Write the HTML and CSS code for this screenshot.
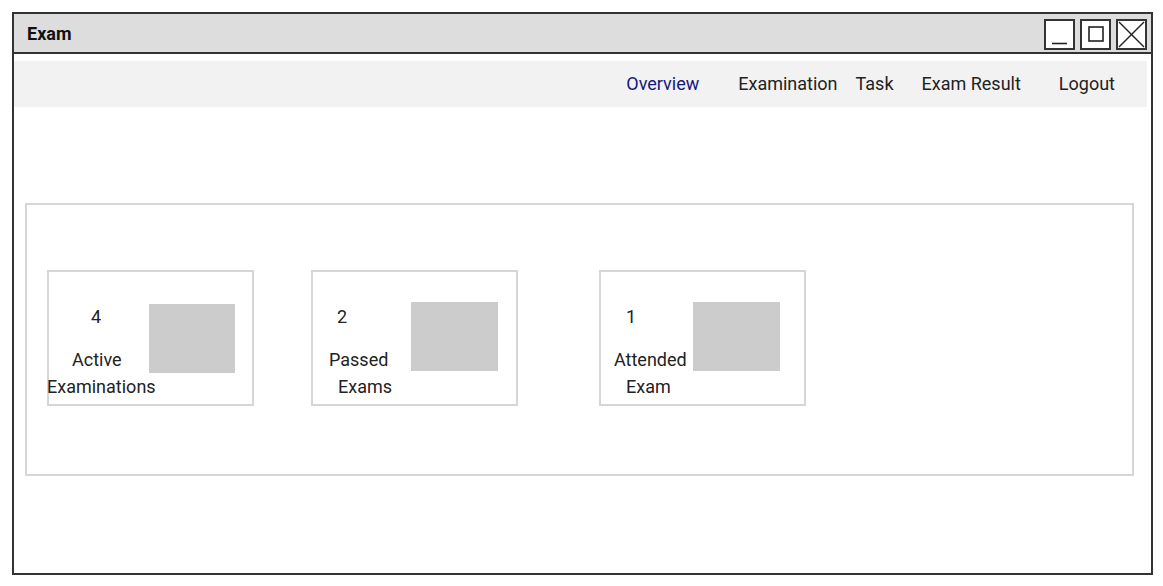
FILE: index.html
```html
<!DOCTYPE html>
<html lang="en">
<head>
<meta charset="utf-8">
<title>Exam</title>
<link rel="stylesheet" href="styles.css">
</head>
<body>
<div class="window">
  <div class="titlebar">
    <span class="title">Exam</span>
    <div class="controls">
      <span class="ctl">
        <svg width="27" height="27" viewBox="0 0 27 27"><line x1="6" y1="22.5" x2="21" y2="22.5" stroke="#222" stroke-width="1.6"/></svg>
      </span>
      <span class="ctl">
        <svg width="27" height="27" viewBox="0 0 27 27"><rect x="7" y="6" width="14" height="14" fill="none" stroke="#222" stroke-width="1.6"/></svg>
      </span>
      <span class="ctl">
        <svg width="27" height="27" viewBox="0 0 27 27"><line x1="1" y1="1" x2="26" y2="26" stroke="#222" stroke-width="1.4"/><line x1="26" y1="1" x2="1" y2="26" stroke="#222" stroke-width="1.4"/></svg>
      </span>
    </div>
  </div>
  <nav class="nav">
    <a class="nav-item active">Overview</a>
    <a class="nav-item m39">Examination</a>
    <a class="nav-item m18">Task</a>
    <a class="nav-item m28">Exam Result</a>
    <a class="nav-item m38">Logout</a>
  </nav>
  <section class="panel">
    <div class="card card-a">
      <div class="stat">
        <div class="num i42">4</div>
        <div class="lbl first i23">Active</div>
        <div class="lbl in2">Examinations</div>
      </div>
      <div class="thumb"></div>
    </div>
    <div class="card card-b">
      <div class="stat">
        <div class="num i24">2</div>
        <div class="lbl first i16">Passed</div>
        <div class="lbl i25">Exams</div>
      </div>
      <div class="thumb"></div>
    </div>
    <div class="card card-c">
      <div class="stat">
        <div class="num i25">1</div>
        <div class="lbl first i13">Attended</div>
        <div class="lbl i25">Exam</div>
      </div>
      <div class="thumb"></div>
    </div>
  </section>
</div>
</body>
</html>
```

FILE: styles.css
```css
html, body {
  margin: 0;
  padding: 0;
  background: #ffffff;
}

body {
  font-family: Roboto, "Liberation Sans", Arial, sans-serif;
  color: #222222;
}

.window {
  margin: 12px 0 0 12px;
  width: 1141px;
  height: 563px;
  box-sizing: border-box;
  border: 2px solid #333333;
  display: flex;
  flex-direction: column;
}

.titlebar {
  height: 40px;
  box-sizing: border-box;
  background: #dddddd;
  border-bottom: 2px solid #333333;
  display: flex;
  justify-content: space-between;
  align-items: flex-start;
  padding: 0 4px 0 13px;
}

.title {
  font-size: 18px;
  font-weight: 700;
  line-height: 39px;
  color: #111111;
}

.controls {
  display: flex;
  gap: 5px;
  margin-top: 5px;
}

.ctl {
  width: 31px;
  height: 31px;
  box-sizing: border-box;
  border: 2px solid #333333;
  background: #ffffff;
  display: flex;
  align-items: center;
  justify-content: center;
}

.ctl svg {
  display: block;
}

.nav {
  margin: 7px 4px 0 0;
  height: 46px;
  box-sizing: border-box;
  padding: 0 32px 2px 0;
  background: #f2f2f2;
  display: flex;
  justify-content: flex-end;
  align-items: center;
}

.nav-item {
  font-size: 18px;
  color: #222222;
  text-decoration: none;
}

.nav-item.active {
  color: #15197a;
}

.m39 { margin-left: 39px; }
.m18 { margin-left: 18px; }
.m28 { margin-left: 28px; }
.m38 { margin-left: 38px; }

.panel {
  margin: 96px 17px 0 11px;
  height: 273px;
  box-sizing: border-box;
  border: 2px solid #d6d6d6;
  display: flex;
  align-items: flex-start;
  padding: 65px 0 0 20px;
}

.card {
  width: 207px;
  height: 136px;
  box-sizing: border-box;
  border: 2px solid #d6d6d6;
  display: flex;
  align-items: flex-start;
}

.card-a { margin-right: 57px; }
.card-b { margin-right: 81px; }

.stat {
  padding-top: 31px;
  font-size: 18px;
  line-height: 27px;
  white-space: nowrap;
}

.card-a .stat { width: 100px; }
.card-b .stat { width: 98px; }
.card-c .stat { width: 92px; }

.lbl.first {
  margin-top: 16px;
}

.i42 { padding-left: 42px; }
.i25 { padding-left: 25px; }
.i24 { padding-left: 24px; }
.i23 { padding-left: 23px; }
.i16 { padding-left: 16px; }
.i13 { padding-left: 13px; }
.in2 { margin-left: -2px; }

.thumb {
  width: 87px;
  height: 69px;
  background: #cccccc;
  margin-top: 30px;
}

.card-a .thumb { width: 86px; margin-top: 32px; }
```
